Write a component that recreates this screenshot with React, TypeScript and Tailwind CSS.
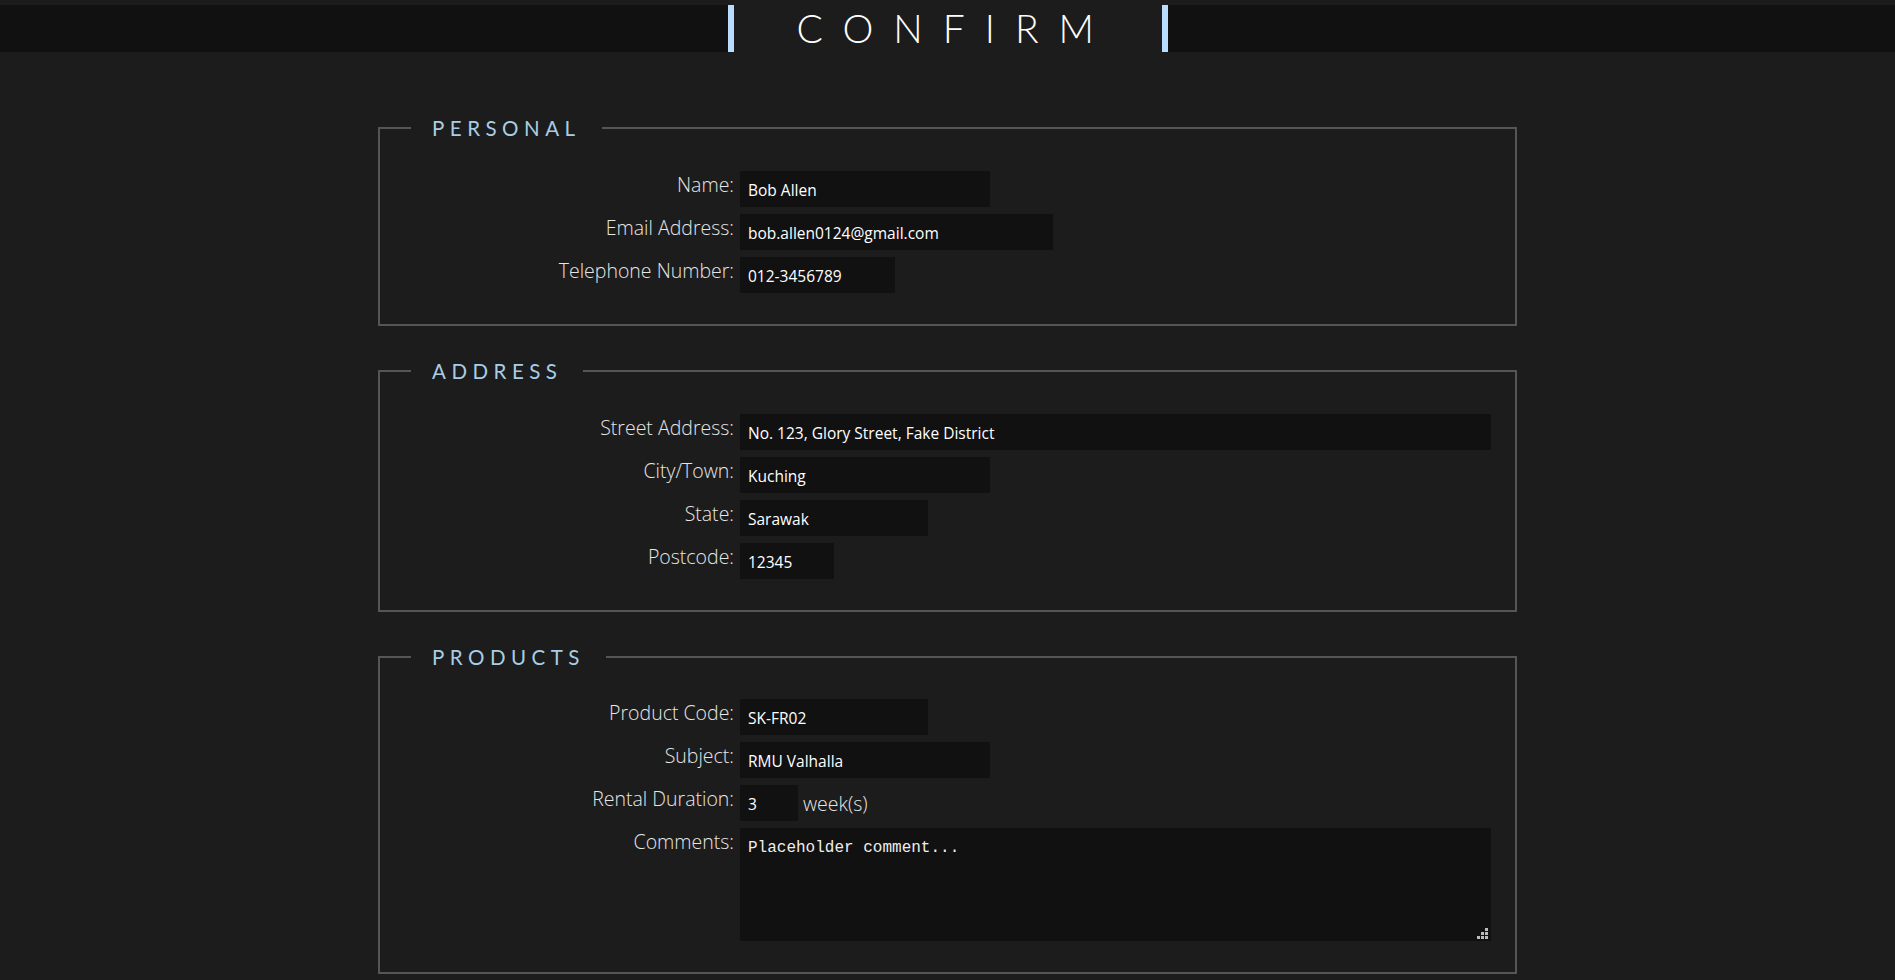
import React from "react";

function Row({ label, children }: { label: string; children: React.ReactNode }) {
  return (
    <div className="flex items-start">
      <label className="w-[354px] shrink-0 text-right font-['Open_Sans',sans-serif] text-[19.5px] leading-[27px] font-light text-[#e6e6e6]">
        {label}
      </label>
      <div className="ml-[6px] flex flex-1 items-center gap-[5px]">{children}</div>
    </div>
  );
}

function Field({ value, w }: { value: string; w: string }) {
  return (
    <input
      readOnly
      value={value}
      className={`${w} h-[36px] bg-[#111111] pl-[8px] pt-[2px] font-['Open_Sans',sans-serif] text-[15.5px] text-white outline-none`}
    />
  );
}

function Section({ title, children }: { title: string; children: React.ReactNode }) {
  return (
    <fieldset className="mx-auto mt-[30px] w-[1139px] border-2 border-[#555555] pr-[24px] pb-[31px] first:mt-[61px]">
      <legend className="ml-[31px] px-[21px] font-['Lato',sans-serif] text-[20.5px] tracking-[5.5px] text-[#a8cde6]">
        {title}
      </legend>
      <div className="flex flex-col gap-[7px] pt-[27px]">{children}</div>
    </fieldset>
  );
}

export default function App() {
  return (
    <div className="min-h-screen bg-[#1c1c1c] pt-[5px] pb-10">
      {/* Title bar */}
      <header className="flex h-[47px] justify-center bg-[#111111]">
        <div className="flex w-[440px] items-center border-x-[6px] border-[#b9dcff] bg-[#1c1c1c] pl-[63px]">
          <h1 className="font-['Lato',sans-serif] text-[39px] font-light tracking-[20px] text-white">CONFIRM</h1>
        </div>
      </header>

      <form className="flex flex-col">
        <Section title="PERSONAL">
          <Row label="Name:">
            <Field value="Bob Allen" w="w-[250px]" />
          </Row>
          <Row label="Email Address:">
            <Field value="bob.allen0124@gmail.com" w="w-[313px]" />
          </Row>
          <Row label="Telephone Number:">
            <Field value="012-3456789" w="w-[155px]" />
          </Row>
        </Section>

        <Section title="ADDRESS">
          <Row label="Street Address:">
            <Field value="No. 123, Glory Street, Fake District" w="flex-1" />
          </Row>
          <Row label="City/Town:">
            <Field value="Kuching" w="w-[250px]" />
          </Row>
          <Row label="State:">
            <Field value="Sarawak" w="w-[188px]" />
          </Row>
          <Row label="Postcode:">
            <Field value="12345" w="w-[94px]" />
          </Row>
        </Section>

        <Section title="PRODUCTS">
          <Row label="Product Code:">
            <Field value="SK-FR02" w="w-[188px]" />
          </Row>
          <Row label="Subject:">
            <Field value="RMU Valhalla" w="w-[250px]" />
          </Row>
          <Row label="Rental Duration:">
            <Field value="3" w="w-[58px]" />
            <span className="font-['Open_Sans',sans-serif] text-[19.5px] font-light text-[#e6e6e6]">week(s)</span>
          </Row>
          <Row label="Comments:">
            <div className="relative flex flex-1">
              <textarea
                readOnly
                defaultValue="Placeholder comment..."
                className="h-[113px] flex-1 resize-none bg-[#111111] pl-[8px] pt-[8px] font-['Liberation_Mono',monospace] text-[16px] text-[#eeeeee] outline-none"
              />
              {/* resize grip */}
              <div className="pointer-events-none absolute right-[3px] bottom-[2px] grid grid-cols-3 gap-px">
                <span className="h-[3px] w-[3px]" />
                <span className="h-[3px] w-[3px]" />
                <span className="h-[3px] w-[3px] bg-[#bbbbbb]" />
                <span className="h-[3px] w-[3px]" />
                <span className="h-[3px] w-[3px] bg-[#bbbbbb]" />
                <span className="h-[3px] w-[3px] bg-[#bbbbbb]" />
                <span className="h-[3px] w-[3px] bg-[#bbbbbb]" />
                <span className="h-[3px] w-[3px] bg-[#bbbbbb]" />
                <span className="h-[3px] w-[3px] bg-[#bbbbbb]" />
              </div>
            </div>
          </Row>
        </Section>
      </form>
    </div>
  );
}
